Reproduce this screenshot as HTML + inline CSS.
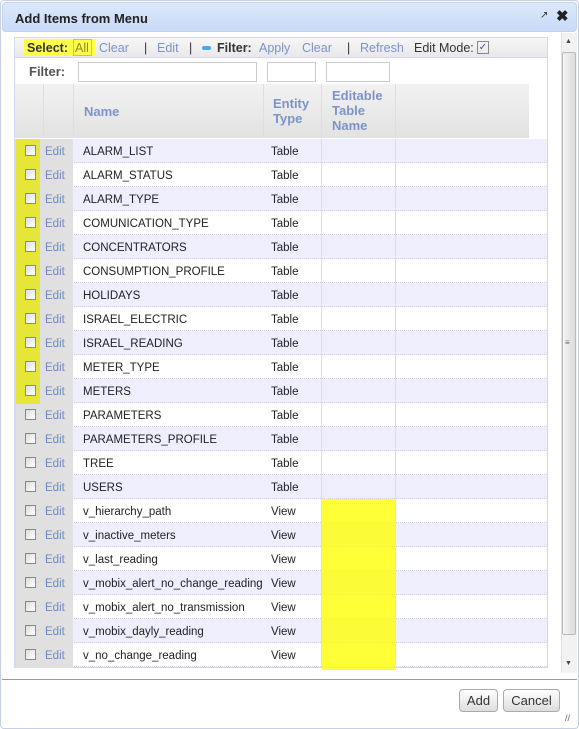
<!DOCTYPE html>
<html><head><meta charset="utf-8"><style>
*{box-sizing:border-box;margin:0;padding:0}
body{width:579px;height:729px;position:relative;background:#fff;font-family:"Liberation Sans",sans-serif;font-size:11.5px;color:#222;overflow:hidden}
.a{position:absolute}
#frame{left:0;top:0;width:579px;height:729px;border:1px solid #c8cfe0;border-radius:4px}
#title{left:2px;top:2px;width:575px;height:30px;background:linear-gradient(#dde8fb,#c9dbf8);border:1px solid #c2d1ee;border-radius:4px;font-weight:bold;font-size:13px;color:#222;padding:8px 0 0 12px}
#tb{left:14px;top:37px;width:534px;height:21px;background:linear-gradient(#f7f7f7,#e8e8ea);border:1px solid #d5d8ee}
.t{position:absolute;top:41px;font-size:12.5px;white-space:nowrap;color:#7a93c9}
.k{color:#333}
#grid{left:14px;top:58px;width:534px;height:610px;border:1px solid #d5d8f5;border-top:none}
.hdr{font-weight:bold;font-size:13px;color:#7d93c8;line-height:15px}
.row{position:absolute;left:15px;width:532px;height:24px;border-bottom:1px dotted #cfcfe0}
.row span{position:absolute;top:7px}
.nm{left:68px}
.ty{left:256px}
.cb{position:absolute;left:10px;width:11px;height:11px;border:1px solid #888;background:linear-gradient(135deg,#ddd,#fff)}
.btn{top:689px;height:23px;border:1px solid #aaa;border-radius:4px;background:linear-gradient(#fff,#ddd);font-size:13px;text-align:center;line-height:21px;color:#333}
</style></head><body>
<div class="a" id="frame"></div>
<div class="a" id="title">Add Items from Menu</div>
<div class="a" style="left:540px;top:10px;font-size:10px;color:#333">&#x2197;</div>
<div class="a" style="left:556px;top:7px;font-size:15px;font-weight:bold;color:#222">✖</div>

<div class="a" id="tb"></div>
<div class="a" style="left:24px;top:39px;width:71px;height:17px;background:#ffff4a"></div>
<div class="t k" style="left:27px;font-weight:bold">Select:</div>
<div class="a" style="left:73px;top:39px;width:19px;height:17px;border:1px solid #e0c030"></div>
<div class="t" style="left:75px;color:#8a8a30">All</div>
<div class="t" style="left:99px">Clear</div>
<div class="t k" style="left:144px">|</div>
<div class="t" style="left:157px">Edit</div>
<div class="t k" style="left:189px">|</div>
<div class="a" style="left:202px;top:46px;width:9px;height:4px;background:#4aa8f0;border-radius:2px"></div>
<div class="t k" style="left:217px;font-weight:bold">Filter:</div>
<div class="t" style="left:259px">Apply</div>
<div class="t" style="left:302px">Clear</div>
<div class="t k" style="left:347px">|</div>
<div class="t" style="left:360px">Refresh</div>
<div class="t k" style="left:414px">Edit Mode:</div>
<div class="a" style="left:477px;top:41px;width:12px;height:13px;border:1px solid #888;font-size:10px;line-height:11px;color:#35a;text-align:center">✓</div>

<div class="a" id="grid"></div>
<div class="a" style="left:29px;top:64px;font-weight:bold;font-size:13px;color:#555">Filter:</div>
<div class="a" style="left:78px;top:62px;width:179px;height:20px;border:1px solid #ccc"></div>
<div class="a" style="left:267px;top:62px;width:49px;height:20px;border:1px solid #ccc"></div>
<div class="a" style="left:326px;top:62px;width:64px;height:20px;border:1px solid #ccc"></div>

<div class="a" style="left:15px;top:84px;width:514px;height:54px;background:linear-gradient(#f2f2f2,#e2e2e2)"></div>
<div class="a" style="left:43px;top:84px;width:1px;height:54px;background:#dcdcf0"></div>
<div class="a" style="left:73px;top:84px;width:1px;height:54px;background:#dcdcf0"></div>
<div class="a" style="left:263px;top:84px;width:1px;height:54px;background:#dcdcf0"></div>
<div class="a" style="left:321px;top:84px;width:1px;height:54px;background:#dcdcf0"></div>
<div class="a" style="left:395px;top:84px;width:1px;height:54px;background:#dcdcf0"></div>
<div class="a hdr" style="left:84px;top:104px">Name</div>
<div class="a hdr" style="left:273px;top:96px">Entity<br>Type</div>
<div class="a hdr" style="left:332px;top:88px">Editable<br>Table<br>Name</div>

<div class="row" style="top:139px;background:#eeeefd"><span class="nm">ALARM_LIST</span><span class="ty">Table</span></div>
<div class="row" style="top:163px"><span class="nm">ALARM_STATUS</span><span class="ty">Table</span></div>
<div class="row" style="top:187px;background:#eeeefd"><span class="nm">ALARM_TYPE</span><span class="ty">Table</span></div>
<div class="row" style="top:211px"><span class="nm">COMUNICATION_TYPE</span><span class="ty">Table</span></div>
<div class="row" style="top:235px;background:#eeeefd"><span class="nm">CONCENTRATORS</span><span class="ty">Table</span></div>
<div class="row" style="top:259px"><span class="nm">CONSUMPTION_PROFILE</span><span class="ty">Table</span></div>
<div class="row" style="top:283px;background:#eeeefd"><span class="nm">HOLIDAYS</span><span class="ty">Table</span></div>
<div class="row" style="top:307px"><span class="nm">ISRAEL_ELECTRIC</span><span class="ty">Table</span></div>
<div class="row" style="top:331px;background:#eeeefd"><span class="nm">ISRAEL_READING</span><span class="ty">Table</span></div>
<div class="row" style="top:355px"><span class="nm">METER_TYPE</span><span class="ty">Table</span></div>
<div class="row" style="top:379px;background:#eeeefd"><span class="nm">METERS</span><span class="ty">Table</span></div>
<div class="row" style="top:403px"><span class="nm">PARAMETERS</span><span class="ty">Table</span></div>
<div class="row" style="top:427px;background:#eeeefd"><span class="nm">PARAMETERS_PROFILE</span><span class="ty">Table</span></div>
<div class="row" style="top:451px"><span class="nm">TREE</span><span class="ty">Table</span></div>
<div class="row" style="top:475px;background:#eeeefd"><span class="nm">USERS</span><span class="ty">Table</span></div>
<div class="row" style="top:499px"><span class="nm">v_hierarchy_path</span><span class="ty">View</span></div>
<div class="row" style="top:523px;background:#eeeefd"><span class="nm">v_inactive_meters</span><span class="ty">View</span></div>
<div class="row" style="top:547px"><span class="nm">v_last_reading</span><span class="ty">View</span></div>
<div class="row" style="top:571px;background:#eeeefd"><span class="nm">v_mobix_alert_no_change_reading</span><span class="ty">View</span></div>
<div class="row" style="top:595px"><span class="nm">v_mobix_alert_no_transmission</span><span class="ty">View</span></div>
<div class="row" style="top:619px;background:#eeeefd"><span class="nm">v_mobix_dayly_reading</span><span class="ty">View</span></div>
<div class="row" style="top:643px"><span class="nm">v_no_change_reading</span><span class="ty">View</span></div>

<div class="a" style="left:15px;top:139px;width:58px;height:529px;background:#e0e0e0"></div>
<div class="a" style="left:16px;top:139px;width:24px;height:265px;background:#e6e63a"></div>
<div class="a" style="left:321px;top:139px;width:1px;height:529px;background:#dcdcf0"></div>
<div class="a" style="left:395px;top:139px;width:1px;height:529px;background:#dcdcf0"></div>
<div class="a" style="left:45px;top:140px;color:#6f88c4;line-height:24px">Edit<br>Edit<br>Edit<br>Edit<br>Edit<br>Edit<br>Edit<br>Edit<br>Edit<br>Edit<br>Edit<br>Edit<br>Edit<br>Edit<br>Edit<br>Edit<br>Edit<br>Edit<br>Edit<br>Edit<br>Edit<br>Edit</div>
<div class="a" style="left:15px;top:145px;width:58px;height:520px">
<i class="cb" style="top:0"></i><i class="cb" style="top:24px"></i><i class="cb" style="top:48px"></i><i class="cb" style="top:72px"></i><i class="cb" style="top:96px"></i><i class="cb" style="top:120px"></i><i class="cb" style="top:144px"></i><i class="cb" style="top:168px"></i><i class="cb" style="top:192px"></i><i class="cb" style="top:216px"></i><i class="cb" style="top:240px"></i><i class="cb" style="top:264px"></i><i class="cb" style="top:288px"></i><i class="cb" style="top:312px"></i><i class="cb" style="top:336px"></i><i class="cb" style="top:360px"></i><i class="cb" style="top:384px"></i><i class="cb" style="top:408px"></i><i class="cb" style="top:432px"></i><i class="cb" style="top:456px"></i><i class="cb" style="top:480px"></i><i class="cb" style="top:504px"></i>
</div>
<div class="a" style="left:15px;top:139px;width:1px;height:529px;background:#d5d8f5"></div>
<div class="a" style="left:322px;top:499px;width:74px;height:171px;background:rgba(255,255,0,0.78)"></div>

<div class="a" style="left:561px;top:33px;width:16px;height:640px;background:#f2f2f2;border-left:1px solid #e0e0e0"></div>
<div class="a" style="left:562px;top:52px;width:14px;height:583px;background:linear-gradient(90deg,#f4f4f4,#dcdcdc);border:1px solid #bbb;border-radius:2px"></div>
<div class="a" style="left:565px;top:338px;font-size:8px;color:#666">≡</div>
<div class="a" style="left:565px;top:38px;font-size:7px;color:#444">▲</div>
<div class="a" style="left:565px;top:660px;font-size:7px;color:#444">▼</div>

<div class="a" style="left:2px;top:679px;width:575px;height:1px;background:#999"></div>
<div class="a btn" style="left:459px;width:39px">Add</div>
<div class="a btn" style="left:503px;width:57px">Cancel</div>
<div class="a" style="left:565px;top:713px;font-size:9px;color:#666">//</div>
</body></html>
